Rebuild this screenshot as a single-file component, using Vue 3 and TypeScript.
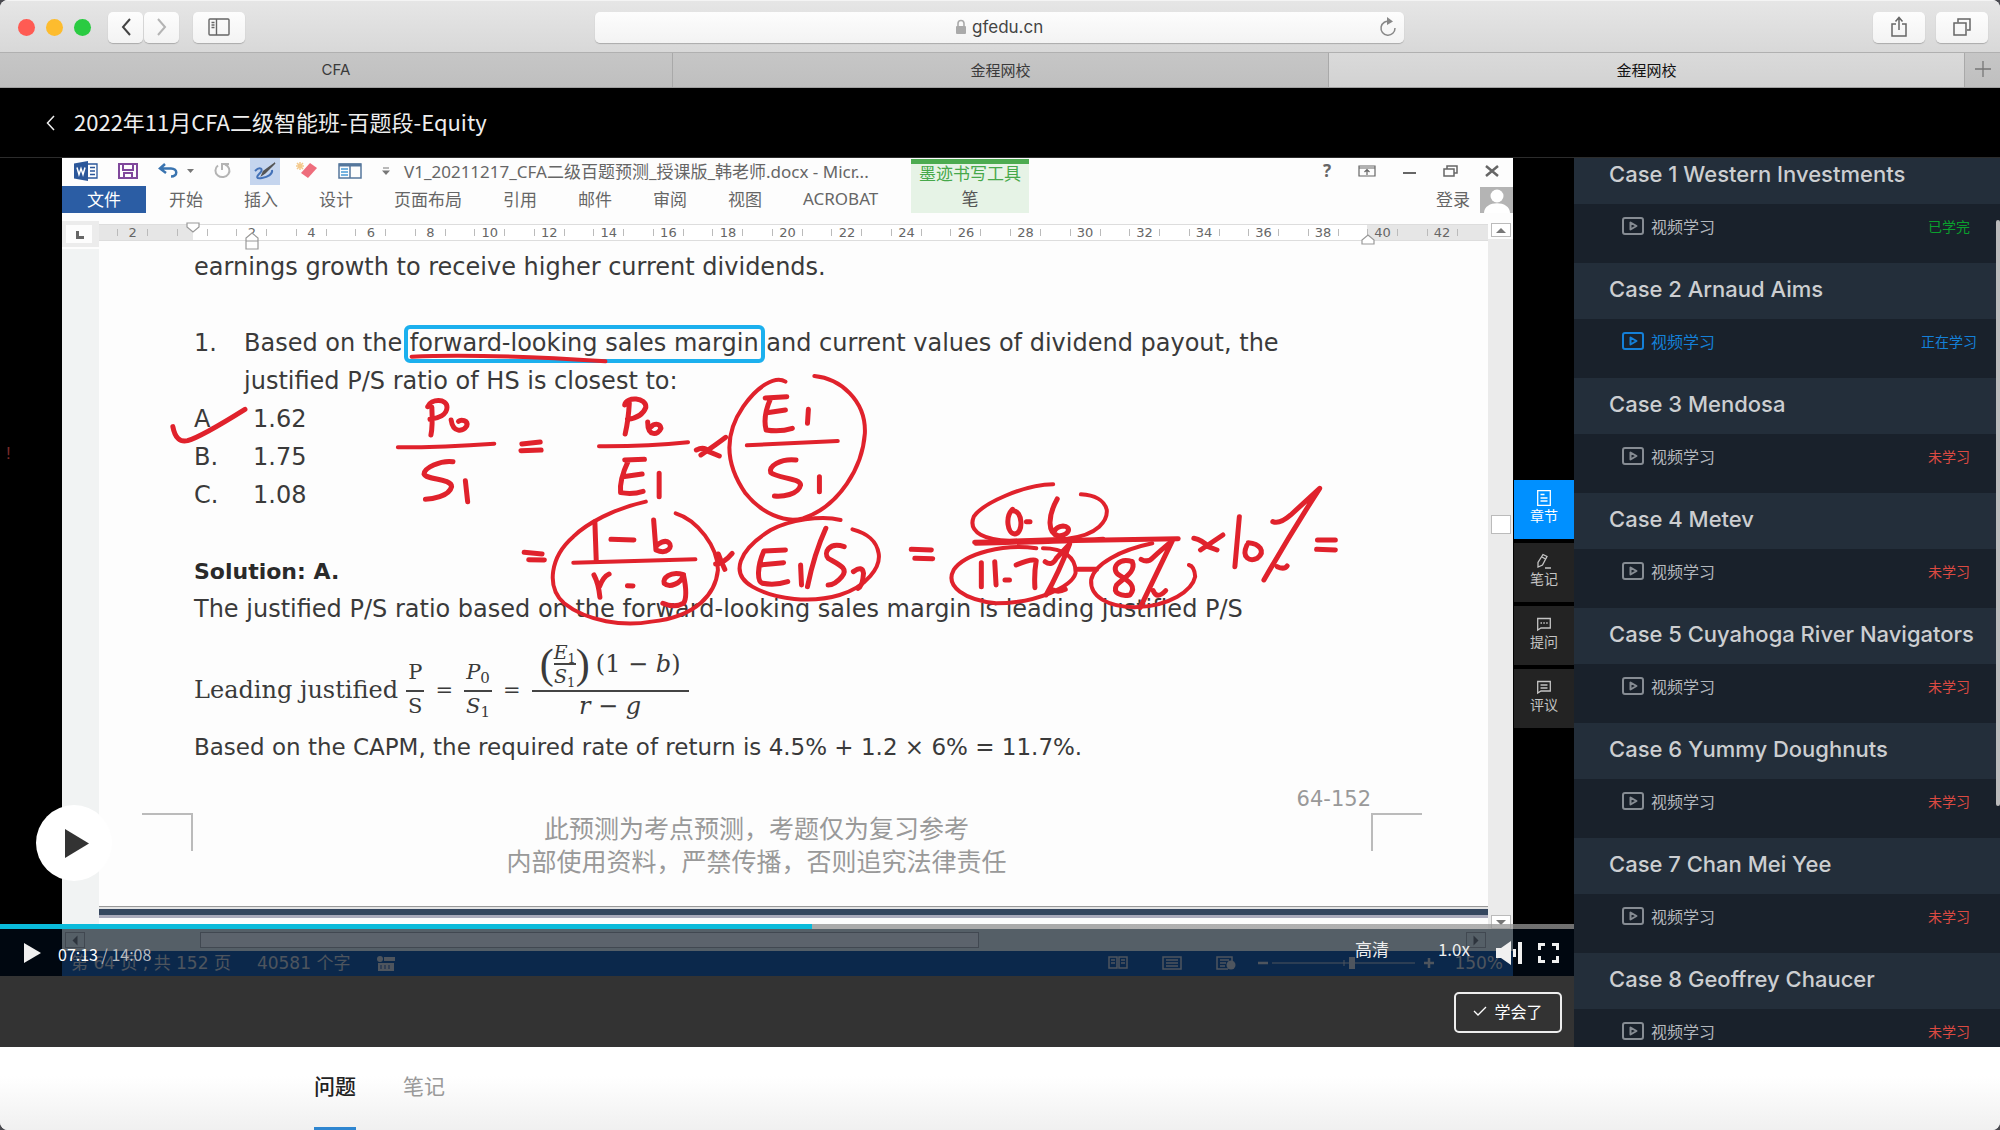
<script setup lang="ts">
import { ref } from 'vue'

interface Lesson {
  title: string
  status: 'done' | 'active' | 'todo'
}

const lessons: Lesson[] = [
  { title: 'Case 1 Western Investments', status: 'done' },
  { title: 'Case 2 Arnaud Aims', status: 'active' },
  { title: 'Case 3 Mendosa', status: 'todo' },
  { title: 'Case 4 Metev', status: 'todo' },
  { title: 'Case 5 Cuyahoga River Navigators', status: 'todo' },
  { title: 'Case 6 Yummy Doughnuts', status: 'todo' },
  { title: 'Case 7 Chan Mei Yee', status: 'todo' },
  { title: 'Case 8 Geoffrey Chaucer', status: 'todo' },
]
const statusText = { done: '已学完', active: '正在学习', todo: '未学习' }

const ribbon = ['开始', '插入', '设计', '页面布局', '引用', '邮件', '审阅', '视图', 'ACROBAT']
const ruler: string[] = ['2', '', ...Array.from({ length: 21 }, (_, i) => String((i + 1) * 2))]
const options = [
  { key: 'A', value: '1.62' },
  { key: 'B.', value: '1.75' },
  { key: 'C.', value: '1.08' },
]

const address = ref('gfedu.cn')
const position = ref(433)

// Pen strokes over the left half of the page
const inkLeft = [
  'M28 320Q35 370 60 362Q90 350 185 268',
  'M592 262Q594 320 590 345M583 260C590 235 625 235 625 262C625 285 605 295 588 298',
  'M634 300C638 340 660 335 668 318C672 300 655 298 650 304',
  'M638 425C610 420 575 445 575 462C580 480 635 475 635 500C630 530 590 538 578 538M665 482L670 545',
  'M788 372L828 366M786 392L830 390',
  'M1022 250Q1020 300 1013 342M1012 255C1015 228 1060 232 1058 262C1052 285 1035 295 1018 298',
  'M1062 306C1062 352 1085 345 1091 325C1088 308 1075 312 1070 320',
  'M1055 418L1012 420M1020 422Q1000 480 1003 518Q1030 524 1052 514M1008 470L1050 462M1087 460L1087 530',
  'M1168 390Q1185 378 1195 395L1218 408M1232 352Q1210 375 1178 405',
  'M1365 230L1318 234M1330 235Q1312 290 1320 330Q1350 337 1377 325M1322 278L1362 270M1412 268L1410 310',
  'M1385 420C1350 415 1325 440 1330 458C1345 475 1395 475 1395 495C1390 525 1355 530 1338 528M1436 470L1436 515',
  'M793 697L832 702M803 719L837 720',
  'M947 605L950 722M982 658L1032 660M1075 600L1080 690C1105 705 1118 680 1108 668C1100 658 1085 670 1080 680',
  'M945 765Q955 790 958 832M957 800Q965 770 978 762M1018 797L1030 798',
  'M1140 764C1110 752 1095 775 1098 790C1110 805 1135 790 1140 765Q1150 830 1140 850Q1120 865 1095 850',
  'M1216 702Q1222 725 1230 748M1210 732Q1228 730 1246 700',
  'M1362 690L1315 693C1300 740 1300 785 1312 790Q1340 797 1367 785M1308 735L1358 728M1395 735L1397 795',
  'M1450 625Q1425 700 1410 800M1490 680C1455 665 1445 700 1455 715C1480 735 1500 745 1485 770Q1470 795 1455 795M1510 755Q1530 735 1532 760Q1530 800 1520 805',
]
const loopsLeft = [
  'M548 110Q700 100 970 124',
  'M518 382Q620 382 728 371',
  'M956 379Q1060 380 1150 367',
  'M1278 376Q1370 370 1476 363',
  'M900 728L1166 718',
  'M1362 185C1340 165 1300 200 1270 260C1225 350 1235 440 1275 520C1310 580 1360 610 1400 595C1480 560 1530 440 1535 340C1538 240 1480 175 1425 168',
  'M1058 545C990 565 930 610 900 650C850 710 840 800 880 850C930 905 1010 920 1070 905C1170 890 1210 820 1215 750C1215 680 1170 600 1123 580',
  'M1482 600C1440 585 1370 600 1330 630C1260 690 1240 760 1290 800C1340 840 1420 850 1480 825C1540 800 1570 740 1565 700C1560 660 1540 640 1508 628',
]

// Pen strokes over the right half of the page
const inkRight = [
  'M70 688L115 690M78 715L118 716',
  'M297 568C280 590 285 640 302 642C322 640 320 570 297 572M328 605L336 605',
  'M397 537C375 590 375 640 400 648C425 645 430 620 410 618Q395 620 390 635',
  'M212 667Q400 662 668 656M214 670Q400 665 500 658',
  'M227 728L227 800M257 725L260 795M280 780L290 780M305 735Q340 715 350 722Q345 760 347 803',
  'M370 725Q385 740 395 715L425 672Q400 760 372 825M388 810Q400 818 415 808',
  'M443 748L485 748',
  'M565 725C535 712 515 745 535 765C560 785 575 800 560 825C540 830 520 820 530 795C545 775 575 755 565 725',
  'M585 718Q600 730 612 712Q630 690 655 662Q620 760 583 862M612 812Q620 840 640 812',
  'M703 655Q722 660 735 680L755 690M768 645L718 690',
  'M805 590L795 740M822 675C808 715 830 725 845 715C865 695 850 670 825 668',
  'M880 605Q895 614 920 585L985 505Q920 640 860 780M890 740Q905 750 912 738',
  'M980 660L1020 660M978 688L1020 690',
]
const loopsRight = [
  'M388 493C320 495 230 550 210 590C195 640 240 660 290 662L420 656C490 645 510 600 508 570C503 540 480 525 450 523',
  'M350 685C280 670 190 700 165 750C145 800 190 840 260 850C350 850 430 800 438 760C440 710 410 685 365 685',
  'M610 670C540 690 480 730 473 780C470 830 510 860 570 862C650 860 700 810 706 770Q705 740 692 735',
]
</script>

<template>
  <div class="window">
    <header class="toolbar">
      <div class="lights"><i class="red"></i><i class="amber"></i><i class="green"></i></div>
      <div class="nav-pair">
        <button class="tool narrow" aria-label="Back">
          <svg width="12" height="20" viewBox="0 0 12 20"><path d="M10 2L3 10l7 8" fill="none" stroke="#444" stroke-width="2" /></svg>
        </button>
        <button class="tool narrow" aria-label="Forward">
          <svg width="12" height="20" viewBox="0 0 12 20"><path d="M2 2l7 8-7 8" fill="none" stroke="#b4b4b4" stroke-width="2" /></svg>
        </button>
      </div>
      <button class="tool side" aria-label="Sidebar">
        <svg width="22" height="18" viewBox="0 0 22 18" fill="none" stroke="#666" stroke-width="1.4">
          <rect x="1" y="1" width="20" height="16" rx="1" /><path d="M8.500 1v16M3.500 4.500h3M3.500 7h3M3.500 9.500h3" />
        </svg>
      </button>
      <div class="address">
        <svg width="12" height="16" viewBox="0 0 12 16"><path d="M3 7V4.500a3 3 0 0 1 6 0V7" fill="none" stroke="#aaa" stroke-width="1.600" /><rect x="1" y="7" width="10" height="8" rx="1" fill="#aaa" /></svg>
        <input v-model="address" aria-label="Address" />
        <button class="reload" aria-label="Reload">
          <svg width="18" height="20" viewBox="0 0 18 20"><path d="M11 4.500A7 7 0 1 0 16 11" fill="none" stroke="#888" stroke-width="1.500" /><path d="M8 0l6 4.500L8 8z" fill="#888" /></svg>
        </button>
      </div>
      <div class="right-tools">
        <button class="tool" aria-label="Share">
          <svg width="18" height="22" viewBox="0 0 18 22" fill="none" stroke="#666" stroke-width="1.500"><path d="M6 8H2v12h14V8h-4M9 14V2M5.500 5.500L9 1.500l3.500 4" /></svg>
        </button>
        <button class="tool" aria-label="Show tabs">
          <svg width="18" height="18" viewBox="0 0 18 18" fill="none" stroke="#666" stroke-width="1.500"><rect x="1" y="5" width="12" height="12" /><path d="M5 4.500V1h12v11h-3" /></svg>
        </button>
      </div>
    </header>

    <nav class="tabs">
      <button class="t1">CFA</button>
      <button class="t2">金程网校</button>
      <button class="t3">金程网校</button>
      <button class="plus" aria-label="New tab">
        <svg width="16" height="16" viewBox="0 0 16 16"><path d="M8 0v16M0 8h16" stroke="#777" stroke-width="1.300" /></svg>
      </button>
    </nav>

    <div class="course">
      <a href="#" aria-label="返回"><svg width="9" height="16" viewBox="0 0 9 16"><path d="M8 1L1.500 8 8 15" fill="none" stroke="#eee" stroke-width="1.500" /></svg></a>
      <h1>2022年11月CFA二级智能班-百题段-Equity</h1>
    </div>

    <main class="stage">
      <section class="player">
        <div class="video">
          <div class="screen">
            <div class="w-title">
              <div class="quick">
                <svg width="24" height="20" viewBox="0 0 24 20"><path d="M0 2.500L14 0v20L0 17.500z" fill="#2b579a" /><path d="M14 3h9v14h-9M16 6.500h5M16 10h5M16 13.500h5" fill="none" stroke="#2b579a" stroke-width="1.300" /><path d="M3 6.500l2 7 2-6 2 6 2-7" fill="none" stroke="#fff" stroke-width="1.500" /></svg>
                <svg width="20" height="16" viewBox="0 0 20 16"><path d="M1 1h18v14H1zM5 1v6h10V1M6 15v-5h8v5" fill="none" stroke="#80489c" stroke-width="2" /></svg>
                <svg class="undo" width="36" height="16" viewBox="0 0 36 16"><path d="M7 1L2 5.500l6 4.500M2 5.500h11c7 0 7 8 0 8" fill="none" stroke="#3a74b0" stroke-width="2.500" /><path d="M29 6h7l-3.500 4z" fill="#777" /></svg>
                <svg width="20" height="16" viewBox="0 0 20 16"><path d="M6 2.500a7 6.500 0 1 0 7-1M10 7V1h7" fill="none" stroke="#b4b4b4" stroke-width="2" /></svg>
                <span class="pen"><svg width="24" height="18" viewBox="0 0 24 18"><path d="M2 9c5-5 9-2 5 2s-4 6 2 5 11-4 10-8" fill="none" stroke="#4472b8" stroke-width="2" /><path d="M22 1L12 11l-3 2 1.500-3.500z" fill="#555" stroke="#555" stroke-width="1.500" /></svg></span>
                <svg width="22" height="18" viewBox="0 0 22 18"><path d="M14 1l7 5-9 10-7-5z" fill="#ee6d7c" /><path d="M4 0v8M0 4h8M1 1l6 6M7 1L1 7" stroke="#f4c98c" stroke-width="1.500" /></svg>
                <svg class="pane" width="24" height="16" viewBox="0 0 24 16"><path d="M1 1h22v14H1zM12 3v12" fill="none" stroke="#55779c" stroke-width="1.500" /><path d="M1 2h22" stroke="#55779c" stroke-width="3" /><path d="M3 6h7M3 9h7M3 12h7" stroke="#4a9bd5" stroke-width="1.500" /></svg>
                <svg width="8" height="8" viewBox="0 0 8 8"><path d="M1 1h6" stroke="#777" /><path d="M0 3.500h8L4 8z" fill="#777" /></svg>
              </div>
              <span class="w-name">V1_20211217_CFA二级百题预测_授课版_韩老师.docx - Micr...</span>
              <div class="w-win">
                <b>?</b>
                <svg width="18" height="12" viewBox="0 0 18 12"><path d="M1 1h16v10H1zM1 3h16M9 10V5M6.500 7L9 4.500 11.500 7" fill="none" stroke="#666" stroke-width="1.200" /></svg>
                <svg width="13" height="12" viewBox="0 0 13 12"><path d="M0 8h13" stroke="#666" stroke-width="2" /></svg>
                <svg width="15" height="12" viewBox="0 0 15 12"><path d="M1 4h10v7H1zM4 4V1h10v7h-3" fill="none" stroke="#666" stroke-width="1.500" /></svg>
                <svg width="14" height="12" viewBox="0 0 14 12"><path d="M1 1l12 10M13 1L1 11" stroke="#666" stroke-width="2.500" /></svg>
              </div>
            </div>
            <div class="w-ribbon">
              <button class="file">文件</button>
              <button v-for="r in ribbon" :key="r" class="rb">{{ r }}</button>
              <span class="login">登录</span>
              <svg class="avatar" width="33" height="26" viewBox="0 0 33 26"><rect width="33" height="26" fill="#b4b4b4" /><circle cx="17" cy="9" r="6.500" fill="#fff" /><path d="M4 26c0-13 26-13 26 0z" fill="#fff" /></svg>
            </div>
            <div class="ink-tab"><span>墨迹书写工具</span><button>笔</button></div>

            <div class="w-main">
              <div class="w-doc">
                <div class="ruler">
                  <div class="corner"><i></i></div>
                  <div class="marks">
                    <div v-for="(n, i) in ruler" :key="i" class="cell"><span>{{ n }}</span></div>
                  </div>
                  <svg class="indents" width="1388" height="30" viewBox="0 0 1388 30" fill="#fff" stroke="#999" stroke-width="1.200"><path d="M88 2h12v4l-6 5-6-5zM147 20v-3l6-5 6 5v3zM147 20h12v8h-12zM1263 23v-4l6-5 6 5v4z" /></svg>
                </div>
                <div class="sheet">
                  <div class="gutter"></div>
                  <article class="page">
                    <div class="body">
                      <p>earnings growth to receive higher current dividends.</p>
                      <p class="gap item"><span>1.</span><span>Based on the <mark>forward-looking sales margin</mark> and current values of dividend payout, the</span></p>
                      <p class="indent">justified P/S ratio of HS is closest to:</p>
                      <p v-for="o in options" :key="o.key" class="opt"><span>{{ o.key }}</span>{{ o.value }}</p>
                      <p class="gap"><strong>Solution: A.</strong></p>
                      <p>The justified P/S ratio based on the forward-looking sales margin is leading justified P/S</p>
                      <div class="formula">
                        <span class="lead">Leading justified</span>
                        <span class="frac"><span>P</span><span>S</span></span>
                        <span class="eq">=</span>
                        <span class="frac it"><span>P<sub>0</sub></span><span>S<sub>1</sub></span></span>
                        <span class="eq">=</span>
                        <span class="frac it big">
                          <span class="product"><b class="paren">(</b><span class="mini"><span>E<sub>1</sub></span><span>S<sub>1</sub></span></span><b class="paren">)</b><span class="rest"><i>(1 − </i>b<i>)</i></span></span>
                          <span>r − g</span>
                        </span>
                      </div>
                      <p class="capm">Based on the CAPM, the required rate of return is 4.5% + 1.2 × 6% = 11.7%.</p>
                    </div>
                    <footer class="foot">
                      <div class="pageno">64-152</div>
                      <div class="foot-row">
                        <i class="crop left"></i>
                        <div class="notice"><p>此预测为考点预测，考题仅为复习参考</p><p>内部使用资料，严禁传播，否则追究法律责任</p></div>
                        <i class="crop right"></i>
                      </div>
                    </footer>
                    <div class="edge"></div>
                  </article>
                </div>
              </div>
              <div class="vscroll">
                <i class="up"></i><i class="thumb"></i><i class="down"></i>
              </div>
            </div>
            <div class="hscroll"><i class="la"></i><i class="bar"></i><i class="ra"></i></div>
            <div class="w-status">
              <span class="pages">第 64 页 , 共 152 页</span><span>40581 个字</span>
              <svg width="19" height="15" viewBox="0 0 19 15"><circle cx="4" cy="3" r="3" fill="#ccc" /><path d="M8 1h11v4H8zM2 7h16v8H2z" fill="#ccc" /><path d="M5 9v4M9 9v4M13 9v4" stroke="#2b579a" /></svg>
              <div class="w-views">
                <svg width="20" height="14" viewBox="0 0 20 14"><path d="M1 1h8v11H1zM11 1h8v11h-8zM3 4h4M3 7h4M13 4h4M13 7h4" fill="none" stroke="#ccc" stroke-width="1.500" /></svg>
                <svg width="20" height="14" viewBox="0 0 20 14"><path d="M1 1h18v12H1zM4 4h12M4 7h12M4 10h12" fill="none" stroke="#ccc" stroke-width="1.500" /></svg>
                <svg width="20" height="14" viewBox="0 0 20 14"><path d="M12 13H1V1h15v4M4 4h9M4 7h6M4 10h5" fill="none" stroke="#ccc" stroke-width="1.500" /><circle cx="15" cy="9" r="4.500" fill="#ccc" /></svg>
                <svg width="176" height="14" viewBox="0 0 176 14"><path d="M0 7h10M166 7h10M171 2v10" stroke="#ccc" stroke-width="2.500" /><path d="M14 7h143M86 4v6" stroke="#ccc" /><rect x="91" y="1" width="6" height="12" fill="#ccc" /></svg>
                <span>150%</span>
              </div>
            </div>

            <svg class="ink" width="1452" height="818" viewBox="0 0 1452 818" fill="none" stroke="#e0222c" stroke-linecap="round" stroke-linejoin="round">
              <g transform="translate(98 162) scale(.4592 .3333)">
                <path v-for="d in inkLeft" :key="d" :d="d" stroke-width="5" vector-effect="non-scaling-stroke" />
                <path v-for="d in loopsLeft" :key="d" :d="d" stroke-width="4" vector-effect="non-scaling-stroke" />
              </g>
              <g transform="translate(818 162) scale(.4464 .3333)">
                <path v-for="d in inkRight" :key="d" :d="d" stroke-width="5" vector-effect="non-scaling-stroke" />
                <path v-for="d in loopsRight" :key="d" :d="d" stroke-width="4" vector-effect="non-scaling-stroke" />
              </g>
            </svg>
          </div>

          <nav class="rail">
            <button class="on">
              <svg width="14" height="16" viewBox="0 0 14 16"><path d="M.7.700h12.600v14.600H.7zM3.500 4.500h4M3.500 8h7M3.500 11h7" /></svg>章节
            </button>
            <button>
              <svg width="14" height="16" viewBox="0 0 14 16"><path d="M1 14V9.500L6 1.500l4 2L5.500 12zM8 15h6M5 4l3.500 2" /></svg>笔记
            </button>
            <button>
              <svg width="14" height="16" viewBox="0 0 14 16"><path d="M.7 2.500h12.600V12H4L.7 14zM3.500 7h1.500M6.300 7h1.500M9.200 7h1.500" /></svg>提问
            </button>
            <button>
              <svg width="14" height="16" viewBox="0 0 14 16"><path d="M.7 2.500h12.600V12H4L.7 14zM3.500 6h7M3.500 9h7" /></svg>评议
            </button>
          </nav>

          <span class="ticker">!</span>

          <button class="big-play" aria-label="播放"><svg width="24" height="29" viewBox="0 0 24 29"><path d="M0 0l24 14.500L0 29z" fill="#333" /></svg></button>

          <div class="controls">
            <input v-model="position" class="progress" type="range" min="0" max="848" aria-label="进度" />
            <div class="bar-row">
              <button aria-label="播放"><svg width="18" height="20" viewBox="0 0 18 20"><path d="M1 0l17 10L1 20z" fill="#f0f0f0" /></svg></button>
              <span class="time"><b>07:13</b> / 14:08</span>
              <button class="quality">高清</button>
              <button class="speed">1.0x</button>
              <button class="vol" aria-label="音量"><svg width="27" height="24" viewBox="0 0 27 24" fill="#f0f0f0"><path d="M0 7h5l10-7v24L5 17H0zM17 8h3v8h-3zM22 1h4v22h-4z" /></svg></button>
              <button aria-label="全屏"><svg width="21" height="20" viewBox="0 0 21 20" fill="none" stroke="#f0f0f0" stroke-width="3"><path d="M1.500 7V1.500H7M14 1.500h5.500V7M19.500 13v5.500H14M7 18.500H1.500V13" /></svg></button>
            </div>
          </div>
        </div>
        <div class="strip">
          <button><svg width="14" height="10" viewBox="0 0 14 10"><path d="M1 5l4 4 8-8" fill="none" stroke="#fff" stroke-width="1.300" /></svg>学会了</button>
        </div>
      </section>

      <aside class="chapters">
        <ul>
          <li v-for="l in lessons" :key="l.title">
            <h2>{{ l.title }}</h2>
            <a href="#" :class="l.status">
              <svg width="22" height="18" viewBox="0 0 22 18" fill="none" stroke="currentColor" stroke-width="2"><rect x="1" y="1" width="20" height="16" rx="2" /><path d="M8.500 5.500v7l6-3.500z" stroke-linejoin="round" /></svg>
              <span>视频学习</span><em>{{ statusText[l.status] }}</em>
            </a>
          </li>
        </ul>
        <i class="scroll-thumb"></i>
      </aside>
    </main>

    <nav class="below">
      <a href="#" class="current">问题</a>
      <a href="#">笔记</a>
    </nav>
  </div>
</template>

<style>
body {
  margin: 0;
  background: #4a4a50;
}
</style>

<style scoped>
* {
  box-sizing: border-box;
}
p, h1, h2, ul {
  margin: 0;
  padding: 0;
}
button {
  font: inherit;
  color: inherit;
  border: 0;
  padding: 0;
  background: none;
}
svg {
  display: block;
  flex: none;
}
a {
  text-decoration: none;
  color: inherit;
}
.window {
  min-height: 100vh;
  display: flex;
  flex-direction: column;
  overflow: hidden;
  border-radius: 8px;
  background: #fff;
  font-family: "Liberation Sans", "Noto Sans CJK SC", sans-serif;
}

/* browser chrome */
.toolbar {
  height: 52px;
  display: flex;
  align-items: center;
  padding: 1px 12px 0 18px;
  background: linear-gradient(#e6e6e6, #d8d8d8);
  border-top: 1px solid #f4f4f4;
}
.lights {
  display: flex;
  gap: 11px;
}
.lights i {
  width: 17px;
  height: 17px;
  border-radius: 50%;
}
.red { background: #ff5b53; }
.amber { background: #fdbc2e; }
.green { background: #2acb42; }
.nav-pair {
  display: flex;
  gap: 1px;
  margin-left: 17px;
}
.tool {
  width: 52px;
  height: 31px;
  display: flex;
  align-items: center;
  justify-content: center;
  border-radius: 5px;
  background: linear-gradient(#fdfdfd, #f3f3f3);
  box-shadow: 0 1px 1px #aaa;
}
.narrow {
  width: 35px;
}
.side {
  margin-left: 14px;
}
.address {
  position: relative;
  width: 809px;
  height: 31px;
  margin: 0 auto;
  display: flex;
  align-items: center;
  justify-content: center;
  gap: 5px;
  border-radius: 5px;
  background: linear-gradient(#fdfdfd, #f3f3f3);
  box-shadow: 0 1px 1px #aaa;
}
.address input {
  width: 72px;
  border: 0;
  padding: 0;
  background: none;
  font: 17px Inter, sans-serif;
  color: #444;
}
.reload {
  position: absolute;
  right: 7px;
}
.right-tools {
  display: flex;
  gap: 11px;
  margin-left: 119px;
}
.tabs {
  height: 36px;
  display: flex;
  border-top: 1px solid #b0b0b0;
  border-bottom: 1px solid #a0a0a0;
  background: linear-gradient(#c6c6c6, #bfbfbf);
  font: 15px Inter, "Noto Sans CJK SC", sans-serif;
  color: #3a3a3a;
}
.tabs button {
  padding-bottom: 2px;
  border-right: 1px solid #a9a9a9;
}
.t1 { flex: 673; }
.t2 { flex: 656; }
.tabs .t3 {
  flex: 636;
  background: linear-gradient(#dadada, #d2d2d2);
  color: #111;
}
.tabs .plus {
  width: 35px;
  border: 0;
  display: flex;
  align-items: center;
  justify-content: center;
}
.course {
  height: 70px;
  display: flex;
  align-items: center;
  gap: 19px;
  padding: 0 46px;
  background: #000;
  border-bottom: 1px solid #2c2c2c;
}
.course h1 {
  padding-bottom: 4px;
  font: 400 22px "Noto Sans CJK SC", sans-serif;
  line-height: 30px;
  color: #eee;
}

/* player */
.stage {
  display: flex;
  background: #000;
}
.player {
  flex: 1;
  min-width: 0;
}
.video {
  position: relative;
  display: flex;
  justify-content: space-between;
  padding-left: 62px;
}
.screen {
  position: relative;
  flex: 1;
  min-width: 0;
  overflow: hidden;
  background: #fdfdfd;
  color: #666;
}
.ink {
  position: absolute;
  left: 0;
  top: 0;
}
.w-title {
  height: 28px;
  display: flex;
  align-items: center;
  padding: 0 14px 3px 12px;
}
.quick {
  display: flex;
  align-items: center;
  gap: 20px;
  width: 330px;
}
.pen {
  background: #c5d5ee;
  padding: 5px 3px 5px;
  margin: 0 -4px 0 -2px;
}
.undo {
  margin-right: -2px;
}
.w-name {
  flex: 1;
  font: 17px "Noto Sans", "Noto Sans CJK SC", sans-serif;
  white-space: nowrap;
}
.w-win {
  display: flex;
  align-items: center;
  gap: 27px;
}
.w-win b {
  font: 700 17px "Noto Sans", sans-serif;
}
.w-ribbon {
  height: 27px;
  display: flex;
  align-items: center;
  gap: 41px;
  font: 17px "Noto Sans", "Noto Sans CJK SC", sans-serif;
}
.w-ribbon .file {
  width: 84px;
  height: 27px;
  margin-right: -18px;
  background: #2b5da4;
  color: #fff;
}
.w-ribbon button, .login {
  padding-bottom: 3px;
}
.rb {
  white-space: nowrap;
}
.login {
  margin-left: auto;
}
.avatar {
  margin-left: -31px;
}
.ink-tab {
  position: absolute;
  left: 849px;
  top: 1px;
  width: 118px;
  height: 54px;
  border-top: 5px solid #4cab50;
  background: #e6f3e6;
  text-align: center;
  font: 17px "Noto Sans CJK SC", sans-serif;
  line-height: 18px;
  color: #46a84a;
}
.ink-tab button {
  display: block;
  margin: 7px auto 0;
  color: #555;
}
.w-main {
  display: flex;
  margin-top: 8px;
}
.w-doc {
  flex: 1;
  min-width: 0;
}
.ruler {
  position: relative;
  display: flex;
  height: 26px;
  padding: 3px 0 7px;
}
.corner {
  width: 37px;
  height: 26px;
  margin-top: -3px;
  border: 4px solid #ececec;
  border-right-width: 7px;
  flex: none;
}
.corner i {
  display: block;
  width: 8px;
  height: 8px;
  margin: 6px 0 0 10px;
  border-left: 3px solid #666;
  border-bottom: 3px solid #666;
}
.marks {
  flex: 1;
  height: 17px;
  display: flex;
  padding: 0 16px 0 4px;
  border-top: 1px solid #ddd;
  border-bottom: 1px solid #ddd;
  background: linear-gradient(90deg, #e6e6e6 94px, #fff 94px, #fff 1268px, #e6e6e6 1268px);
  font: 13px "DejaVu Sans", sans-serif;
}
.cell {
  flex: 1;
  display: flex;
  align-items: center;
  justify-content: center;
}
.cell span {
  width: 31px;
  height: 7px;
  line-height: 8px;
  text-align: center;
  border-left: 1px solid #bbb;
  border-right: 1px solid #bbb;
}
.indents {
  position: absolute;
  left: 37px;
  top: 0;
}
.sheet {
  display: flex;
  padding-top: 2px;
}
.gutter {
  width: 37px;
  flex: none;
  background: #f1f3f3;
}
.page {
  flex: 1;
  min-width: 0;
}
.body {
  padding-left: 95px;
  font: 24px "DejaVu Sans", sans-serif;
  color: #3a3a3a;
  white-space: nowrap;
}
.body p {
  line-height: 37px;
  height: 38px;
}
.body p.gap {
  margin-top: 38px;
}
.body strong {
  font-size: 22px;
  color: #2a2a2a;
}
.body .capm {
  font-size: 23px;
}
.item {
  display: flex;
}
.item span:first-child {
  width: 50px;
}
.body mark {
  position: relative;
  background: none;
  color: inherit;
}
.body mark::after {
  content: "";
  position: absolute;
  inset: -4px -6px -6px;
  border: 4px solid #1cb0ee;
  border-radius: 6px;
}
.indent {
  padding-left: 50px;
}
.opt {
  display: flex;
}
.opt span {
  width: 59px;
}
.formula {
  height: 100px;
  margin: 11px 0 -11px;
  display: flex;
  align-items: center;
  gap: 11px;
  font: 21px "DejaVu Serif", serif;
}
.lead {
  margin-right: -3px;
  font-size: 24px;
}
.frac {
  text-align: center;
}
.frac > span {
  display: block;
  height: 46px;
  padding: 13px 2px 0;
  line-height: 30px;
}
.frac > span:last-child {
  padding-top: 0;
  line-height: 28px;
  border-top: 2px solid #444;
}
.it {
  font-style: italic;
}
.it sub, .it i {
  font-style: normal;
}
.it sub {
  font-size: 15px;
  line-height: 0;
  vertical-align: -4px;
}
.big {
  font-size: 24px;
}
.frac .product {
  display: flex;
  align-items: center;
  justify-content: center;
  padding: 0 0 6px;
}
.frac.big > span:last-child {
  width: 157px;
}
.mini {
  font-size: 19px;
}
.mini > span {
  display: block;
  line-height: 22px;
}
.mini > span:last-child {
  border-top: 2px solid #444;
}
.mini sub {
  font-size: 13px;
}
.paren {
  font: 400 42px "Liberation Serif", serif;
}
.rest {
  margin-left: 6px;
}
.foot {
  padding: 19px 66px 0 43px;
  color: #999;
}
.pageno {
  padding-right: 51px;
  text-align: right;
  font: 21px "DejaVu Sans", sans-serif;
  line-height: 26px;
}
.foot-row {
  display: flex;
  margin-top: 1px;
}
.crop {
  width: 51px;
  height: 38px;
  flex: none;
  border-top: 2px solid #bbb;
}
.left { border-right: 2px solid #bbb; }
.right { border-left: 2px solid #bbb; }
.notice {
  flex: 1;
  margin-top: -2px;
  padding: 0 51px 2px 0;
  text-align: center;
  font: 25px "Noto Sans CJK SC", sans-serif;
}
.notice p {
  line-height: 33px;
}
.edge {
  height: 12px;
  margin: 27px 0 11px;
  border-top: 1px solid #999;
  border-bottom: 3px solid #aab;
  background: #35475f;
  box-shadow: inset 0 2px #e4e4e4;
}
.vscroll {
  width: 25px;
  display: flex;
  flex-direction: column;
  align-items: center;
  padding-top: 2px;
  background: linear-gradient(#fdfdfd 18px, #ebebeb 18px);
}
.vscroll i {
  width: 20px;
  height: 14px;
  border: 1px solid #bbb;
  background: #fff;
  display: flex;
  align-items: center;
  justify-content: center;
}
.vscroll .thumb {
  height: 19px;
  margin: 278px 0 381px;
}
.up::after, .down::after, .la::after, .ra::after {
  content: "";
  border: 5px solid transparent;
  border-top-width: 0;
  border-bottom-color: #777;
}
.down::after {
  transform: rotate(180deg);
}
.hscroll {
  height: 22px;
  display: flex;
  align-items: center;
  padding: 0 27px 0 3px;
  background: #dfe6e4;
}
.hscroll i {
  width: 20px;
  height: 16px;
  border: 1px solid #aaa;
  display: flex;
  align-items: center;
  justify-content: center;
}
.hscroll .bar {
  width: 779px;
  margin: 0 auto 0 115px;
  background: #f2f2f2;
}
.la::after { transform: rotate(-90deg); }
.ra::after { transform: rotate(90deg); }
.w-status {
  height: 25px;
  display: flex;
  align-items: center;
  gap: 26px;
  padding: 0 10px 1px 9px;
  background: #1f579b;
  color: #ccc;
  font: 17px "DejaVu Sans", "Noto Sans CJK SC", sans-serif;
  line-height: 22px;
}
.w-views {
  margin-left: auto;
  display: flex;
  align-items: center;
  gap: 34px;
}
.w-views svg:nth-child(4) { margin: 0 -14px 0 -12px; }

.rail {
  width: 61px;
  display: flex;
  flex-direction: column;
  gap: 4px;
  padding: 322px 0 0 1px;
  font: 14px "Noto Sans CJK SC", sans-serif;
  color: #c4c4c4;
}
.rail button {
  height: 59px;
  display: flex;
  flex-direction: column;
  align-items: center;
  padding-top: 10px;
  line-height: 19px;
  background: #232323;
}
.rail .on {
  background: #0090ff;
  color: #fff;
}
.rail svg {
  fill: none;
  stroke: currentColor;
  stroke-width: 1.300;
}
.ticker {
  position: absolute;
  left: 6px;
  top: 286px;
  font-size: 17px;
  color: #7a2a2a;
}
.big-play {
  position: absolute;
  left: 36px;
  top: 647px;
  width: 76px;
  height: 76px;
  padding-left: 6px;
  display: flex;
  align-items: center;
  justify-content: center;
  border-radius: 50%;
  background: #fff;
}
.controls {
  position: absolute;
  left: 0;
  right: 0;
  bottom: 0;
}
.progress {
  appearance: none;
  display: block;
  width: 100%;
  height: 5px;
  margin: 0;
  background: linear-gradient(90deg, #0abbdb 812px, #aaa 812px, #aaa 1120px, rgba(150, 150, 150, .75) 1120px);
}
.progress::-webkit-slider-thumb {
  appearance: none;
  width: 1px;
  height: 5px;
}
.bar-row {
  height: 47px;
  display: flex;
  align-items: center;
  padding: 0 15px 0 23px;
  background: rgba(0, 12, 26, .62);
  color: #eee;
}
.time {
  margin: 2px auto 0 17px;
  font: 16px "Noto Sans CJK SC", sans-serif;
  color: #b8bcc0;
}
.time b {
  font-weight: 400;
  color: #fff;
}
.quality, .speed {
  margin-bottom: 9px;
  font: 17px "Noto Sans CJK SC", sans-serif;
}
.speed {
  margin-left: 49px;
}
.vol {
  margin: 0 15px 0 26px;
}
.strip {
  height: 71px;
  display: flex;
  justify-content: flex-end;
  padding: 16px 12px 0;
  background: #333;
}
.strip button {
  width: 108px;
  height: 41px;
  padding-bottom: 3px;
  display: flex;
  align-items: center;
  justify-content: center;
  gap: 7px;
  border: 2px solid #eee;
  border-radius: 5px;
  color: #fff;
  font: 16px "Noto Sans CJK SC", sans-serif;
}

/* chapter list */
.chapters {
  position: relative;
  width: 426px;
  flex: none;
  contain: size;
  overflow: hidden;
  background: #19212b;
}
.chapters ul {
  margin-top: -10px;
  list-style: none;
}
.chapters h2 {
  height: 56px;
  padding-left: 35px;
  font: 500 22px Inter, sans-serif;
  line-height: 53px;
  color: #ccced1;
  background: #232e3a;
}
.chapters a {
  height: 59px;
  display: flex;
  align-items: center;
  padding: 0 23px 15px 48px;
  color: #868c93;
  font: 16px "Noto Sans CJK SC", sans-serif;
}
.chapters a span {
  flex: 1;
  margin-left: 7px;
  color: #b4b8bd;
}
.chapters em {
  width: 56px;
  text-align: center;
  font-style: normal;
  font-size: 14px;
}
.chapters .done em { color: #0aa02e; }
.chapters .active, .chapters .active span { color: #1480d8; }
.chapters .todo em { color: #dc4a42; }
.scroll-thumb {
  position: absolute;
  right: 0;
  top: 62px;
  width: 4px;
  height: 586px;
  border-radius: 2px;
  background: #bbb;
}

.below {
  flex: 1;
  display: flex;
  gap: 47px;
  min-height: 83px;
  padding-left: 314px;
  background: linear-gradient(#fff 35%, #f0f0f0);
  font: 21px "Noto Sans CJK SC", sans-serif;
  color: #999;
}
.below a {
  line-height: 77px;
}
.below .current {
  font-weight: 500;
  color: #222;
  border-bottom: 3px solid #2f86d0;
}
</style>
